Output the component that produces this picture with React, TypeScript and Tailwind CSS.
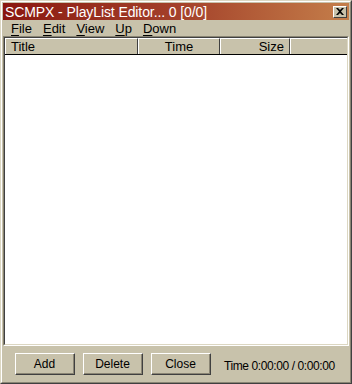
import React from 'react';

const menus = ['File', 'Edit', 'View', 'Up', 'Down'];

function Btn({ label }: { label: string }) {
  return (
    <div className="w-[60px] h-[22px] border-t border-l border-white border-r border-b border-r-[#404040] border-b-[#404040]">
      <div className="h-full border-r border-b border-[#8a8574] flex items-center justify-center text-[12px] text-black">
        {label}
      </div>
    </div>
  );
}

export default function App() {
  return (
    <div
      className="w-[352px] h-[384px] bg-[#c8c2ab] border border-[#dcd7c2] border-r-[#404040] border-b-[#404040] select-none"
      style={{ fontFamily: '"Liberation Sans", Arial, sans-serif' }}
    >
      <div className="h-full border border-white border-r-[#8a8574] border-b-[#8a8574] p-px flex flex-col">
        {/* title bar */}
        <div className="h-[17px] flex items-center pl-[2px] pr-[2px] bg-gradient-to-r from-[#8a1610] via-[#a3402a] to-[#c47e4a]">
          <span className="text-white text-[14px] leading-none tracking-[-0.1px] flex-1">
            SCMPX - PlayList Editor... 0 [0/0]
          </span>
          <div className="w-[14px] h-[12px] bg-[#c8c2ab] border border-white border-r-[#404040] border-b-[#404040] flex items-center justify-center">
            <svg width="8" height="7" viewBox="0 0 8 7">
              <path d="M0 0h2l2 2 2-2h2L5 3.5 8 7H6L4 5 2 7H0l3-3.5z" fill="#000" />
            </svg>
          </div>
        </div>

        {/* menu */}
        <div className="h-[16px] flex items-center gap-[11px] pl-[8px] text-[13px] text-black">
          {menus.map((m) => (
            <span key={m} className="leading-none">
              <span className="underline underline-offset-[2px]">{m[0]}</span>
              {m.slice(1)}
            </span>
          ))}
        </div>

        {/* list */}
        <div className="flex-1 flex flex-col border border-[#8a8574] border-r-white border-b-white">
          <div className="flex-1 flex flex-col border border-[#404040] border-r-[#dcd7c2] border-b-[#dcd7c2]">
            <div className="h-[17px] flex text-[13px] text-black border-b border-black">
              <div className="w-[133px] border-t border-l border-white border-r border-r-[#404040] flex items-center pl-[5px]">
                Title
              </div>
              <div className="w-[82px] border-t border-l border-white border-r border-r-[#404040] flex items-center justify-center">
                Time
              </div>
              <div className="w-[70px] border-t border-l border-white border-r border-r-[#404040] flex items-center justify-end pr-[5px]">
                Size
              </div>
              <div className="flex-1 border-t border-l border-white" />
            </div>
            <div className="flex-1 bg-white" />
          </div>
        </div>

        {/* bottom */}
        <div className="h-[35px] flex items-start pt-[7px] pl-[12px] gap-[8px]">
          <Btn label="Add" />
          <Btn label="Delete" />
          <Btn label="Close" />
          <span className="ml-[5px] mt-[4px] text-[12px] text-black tracking-[-0.4px]">Time 0:00:00 / 0:00:00</span>
        </div>
      </div>
    </div>
  );
}
